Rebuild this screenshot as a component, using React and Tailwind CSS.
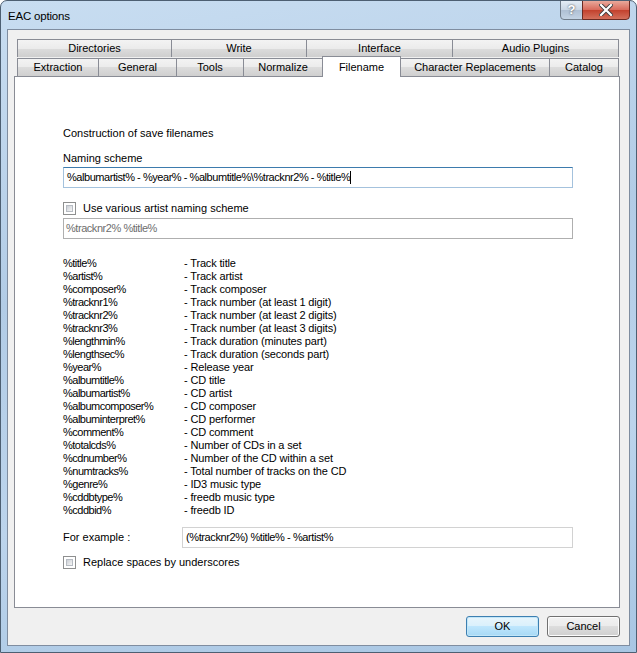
const topTabs = [
  { label: 'Directories', w: 'w-[155px]' },
  { label: 'Write', w: 'w-[136px]' },
  { label: 'Interface', w: 'w-[147px]' },
  { label: 'Audio Plugins', w: 'w-[167px]' },
]

const bottomTabs = [
  { label: 'Extraction', w: 'w-[82px]' },
  { label: 'General', w: 'w-[79px]' },
  { label: 'Tools', w: 'w-[68px]' },
  { label: 'Normalize', w: 'w-[80px]' },
  { label: 'Filename', w: 'w-[79px]', active: true },
  { label: 'Character Replacements', w: 'w-[150px]' },
  { label: 'Catalog', w: 'w-[70px]' },
]

const vars = [
  ['%title%', '- Track title'],
  ['%artist%', '- Track artist'],
  ['%composer%', '- Track composer'],
  ['%tracknr1%', '- Track number (at least 1 digit)'],
  ['%tracknr2%', '- Track number (at least 2 digits)'],
  ['%tracknr3%', '- Track number (at least 3 digits)'],
  ['%lengthmin%', '- Track duration (minutes part)'],
  ['%lengthsec%', '- Track duration (seconds part)'],
  ['%year%', '- Release year'],
  ['%albumtitle%', '- CD title'],
  ['%albumartist%', '- CD artist'],
  ['%albumcomposer%', '- CD composer'],
  ['%albuminterpret%', '- CD performer'],
  ['%comment%', '- CD comment'],
  ['%totalcds%', '- Number of CDs in a set'],
  ['%cdnumber%', '- Number of the CD within a set'],
  ['%numtracks%', '- Total number of tracks on the CD'],
  ['%genre%', '- ID3 music type'],
  ['%cddbtype%', '- freedb music type'],
  ['%cddbid%', '- freedb ID'],
]

function Tab({ label, w }) {
  return (
    <div
      className={`${w} h-[18px] flex items-center justify-center border border-b-0 border-[#898c95] -ml-px first:ml-0 bg-[linear-gradient(#f3f3f3,#ebebeb_50%,#dcdcdc_50%,#cfcfcf)] text-[11px] text-black`}
    >
      {label}
    </div>
  )
}

function Checkbox() {
  return (
    <div className="w-[13px] h-[13px] border border-[#8e8f8f] bg-white p-[2px]">
      <div className="w-full h-full bg-[linear-gradient(135deg,#cbcfd5,#f6f6f6)] border border-[#b7bcc3]" />
    </div>
  )
}

export default function App() {
  return (
    <div
      className="w-[637px] h-[653px] flex flex-col rounded-t-[7px] border border-[#4d5f72] bg-[linear-gradient(170deg,#c8ddf1,#b2cce6_40%,#bcd4ec_70%,#a8c6e3)] overflow-hidden"
      style={{ fontFamily: '"Liberation Sans", Arial, sans-serif' }}
    >
      {/* title bar */}
      <div className="h-[28px] flex items-start justify-between shrink-0">
        <div className="pl-[7px] pt-[8px] text-[11.5px] leading-[14px] tracking-[-0.2px] text-black">
          EAC options
        </div>
        <div className="flex mr-[6px] -mt-px">
          <div className="w-[23px] h-[20px] rounded-bl-[4px] border border-[#6f7b89] bg-[linear-gradient(#e4ecf5,#c9d6e4_50%,#aebfd3_50%,#c3d3e4)] flex items-center justify-center text-[13px] font-bold text-white [text-shadow:0_0_2px_#333]">
            ?
          </div>
          <div className="w-[48px] h-[20px] -ml-px rounded-br-[4px] border border-[#6b2a22] bg-[linear-gradient(#e9a99b,#d8695a_50%,#c2402c_50%,#d3705c)] flex items-center justify-center">
            <svg width="14" height="12" viewBox="0 0 14 12">
              <path d="M2 1 L12 11 M12 1 L2 11" stroke="#3d3d3d" strokeWidth="4" strokeLinecap="square" />
              <path d="M2 1 L12 11 M12 1 L2 11" stroke="#ffffff" strokeWidth="2.2" strokeLinecap="square" />
            </svg>
          </div>
        </div>
      </div>

      {/* client area */}
      <div className="flex-1 mx-[6px] mb-[6px] border border-[#7f8da0] bg-[#f0f0f0] flex flex-col">
        <div className="pt-[9px] pl-[6px] pr-[9px]">
          {/* tabs */}
          <div className="pl-[3px]">
            <div className="flex">
              {topTabs.map((t) => (
                <Tab key={t.label} {...t} />
              ))}
            </div>
            <div className="flex h-[19px] items-end">
              {bottomTabs.map((t) =>
                t.active ? (
                  <div
                    key={t.label}
                    className={`${t.w} h-[21px] -mt-[2px] -ml-px -mb-px relative z-10 flex items-start pt-[2px] justify-center border border-b-0 border-[#898c95] bg-white text-[11px] text-black`}
                  >
                    {t.label}
                  </div>
                ) : (
                  <Tab key={t.label} {...t} />
                )
              )}
            </div>
          </div>

          {/* panel */}
          <div className="h-[532px] border border-[#898c95] bg-white pl-[48px] pr-[46px] pt-[50px] text-[11px] leading-[13px] text-black">
            <div>Construction of save filenames</div>
            <div className="mt-[12px]">Naming scheme</div>
            <div className="mt-[2px] h-[21px] border border-[#a4c2dd] border-t-[#3d7bad] flex items-center pl-[3px] tracking-[-0.45px]">
              <span>%albumartist% - %year% - %albumtitle%\%tracknr2% - %title%</span>
              <span className="w-px h-[13px] bg-black" />
            </div>
            <div className="mt-[14px] flex items-center gap-[7px]">
              <Checkbox />
              <span>Use various artist naming scheme</span>
            </div>
            <div className="mt-[3px] h-[21px] border border-[#afafaf] flex items-center pl-[2px] text-[#6d6d6d] tracking-[-0.45px]">
              %tracknr2% %title%
            </div>

            <div className="mt-[18px] flex flex-col">
              {vars.map(([k, v]) => (
                <div key={k} className="flex h-[13px]">
                  <span className="w-[121px] shrink-0 tracking-[-0.5px]">{k}</span>
                  <span className="tracking-[-0.15px]">{v}</span>
                </div>
              ))}
            </div>

            <div className="mt-[10px] flex items-center">
              <span className="w-[119px] shrink-0">For example :</span>
              <div className="flex-1 h-[21px] border border-[#d2d2d2] flex items-center pl-[3px] tracking-[-0.4px]">
                (%tracknr2%) %title% - %artist%
              </div>
            </div>
            <div className="mt-[8px] flex items-center gap-[7px]">
              <Checkbox />
              <span>Replace spaces by underscores</span>
            </div>
          </div>
        </div>

        {/* buttons */}
        <div className="flex justify-end gap-[8px] pr-[9px] pt-[8px]">
          <div className="w-[73px] h-[21px] rounded-[3px] border border-[#3c7fb1] bg-[linear-gradient(#e8f5fc,#d9f0fc_50%,#bee6fd_50%,#a7d9f5)] shadow-[inset_0_0_0_1px_#c2e6f8] flex items-center justify-center text-[11px] text-black">
            OK
          </div>
          <div className="w-[73px] h-[21px] rounded-[3px] border border-[#707070] bg-[linear-gradient(#f2f2f2,#ebebeb_50%,#dddddd_50%,#cfcfcf)] shadow-[inset_0_0_0_1px_#fcfcfc] flex items-center justify-center text-[11px] text-black">
            Cancel
          </div>
        </div>
      </div>
    </div>
  )
}
